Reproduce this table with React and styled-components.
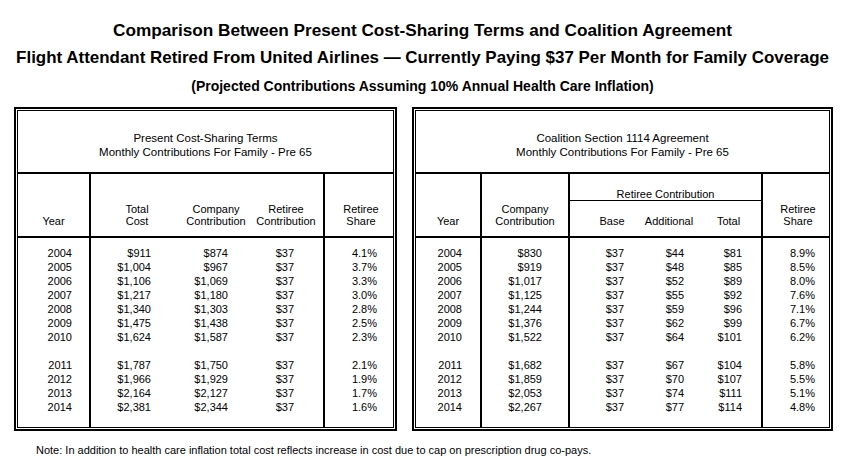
import styled, { createGlobalStyle } from 'styled-components'

const GlobalStyle = createGlobalStyle`
	body {
		margin: 0;
		background: #fff;
		color: #000;
		font-family: "Liberation Sans", Arial, sans-serif;
	}
`

// 연도별 데이터
const presentRows = [
	['2004', '$911', '$874', '$37', '4.1%'],
	['2005', '$1,004', '$967', '$37', '3.7%'],
	['2006', '$1,106', '$1,069', '$37', '3.3%'],
	['2007', '$1,217', '$1,180', '$37', '3.0%'],
	['2008', '$1,340', '$1,303', '$37', '2.8%'],
	['2009', '$1,475', '$1,438', '$37', '2.5%'],
	['2010', '$1,624', '$1,587', '$37', '2.3%'],
	['2011', '$1,787', '$1,750', '$37', '2.1%'],
	['2012', '$1,966', '$1,929', '$37', '1.9%'],
	['2013', '$2,164', '$2,127', '$37', '1.7%'],
	['2014', '$2,381', '$2,344', '$37', '1.6%'],
]

const coalitionRows = [
	['2004', '$830', '$37', '$44', '$81', '8.9%'],
	['2005', '$919', '$37', '$48', '$85', '8.5%'],
	['2006', '$1,017', '$37', '$52', '$89', '8.0%'],
	['2007', '$1,125', '$37', '$55', '$92', '7.6%'],
	['2008', '$1,244', '$37', '$59', '$96', '7.1%'],
	['2009', '$1,376', '$37', '$62', '$99', '6.7%'],
	['2010', '$1,522', '$37', '$64', '$101', '6.2%'],
	['2011', '$1,682', '$37', '$67', '$104', '5.8%'],
	['2012', '$1,859', '$37', '$70', '$107', '5.5%'],
	['2013', '$2,053', '$37', '$74', '$111', '5.1%'],
	['2014', '$2,267', '$37', '$77', '$114', '4.8%'],
]

/**
 * 컬럼 설정
 * head - 헤더 텍스트 줄, width - 폭, line - 오른쪽 세로선, pad - 값 오른쪽 여백, shift - 헤더 이동
 */
const presentCols = [
	{ head: ['Year'], width: 73, line: true, pad: 17, shift: 0 },
	{ head: ['Total', 'Cost'], width: 92, pad: 32, shift: 0 },
	{ head: ['Company', 'Contribution'], width: 66, pad: 21, shift: 0 },
	{ head: ['Retiree', 'Contribution'], width: 76, line: true, pad: 29, shift: 0 },
	{ head: ['Retiree', 'Share'], width: 68, pad: 16, shift: 2 },
]

const coalitionCols = [
	{ head: ['Year'], width: 66, line: true, pad: 18, shift: 0, rows: '2 / 4' },
	{ head: ['Company', 'Contribution'], width: 88, line: true, pad: 26, shift: 0, rows: '2 / 4' },
	{ head: ['Base'], width: 80, pad: 26, shift: 2, rows: '3' },
	{ head: ['Additional'], width: 40, pad: 6, shift: -1, rows: '3' },
	{ head: ['Total'], width: 73, line: true, pad: 19, shift: 3, rows: '3' },
	{ head: ['Retiree', 'Share'], width: 66, pad: 14, shift: 2, rows: '2 / 4' },
]

const colTemplate = cols => cols.map(c => `${c.width}px`).join(' ')

function DataColumns({ cols, rows, dataRow }) {
	return cols.map((col, i) => (
		<DataCol key={i} $line={col.line} $pad={col.pad} $row={dataRow}>
			{rows.map((r, k) => (
				<Value key={k} $gap={r[0] === '2011'}>
					{r[i]}
				</Value>
			))}
		</DataCol>
	))
}

function HeadCells({ cols, defaultRow }) {
	return cols.map((col, i) => (
		<HeadCell key={i} $line={col.line} $shift={col.shift} $rows={col.rows || defaultRow}>
			{col.head.map(t => (
				<span key={t}>{t}</span>
			))}
		</HeadCell>
	))
}

function App() {
	return (
		<Page>
			<GlobalStyle />
			<Titles>
				<Title $size={17.2}>Comparison Between Present Cost-Sharing Terms and Coalition Agreement</Title>
				<Title $size={16.95}>
					Flight Attendant Retired From United Airlines — Currently Paying $37 Per Month for Family Coverage
				</Title>
				<SubTitle>(Projected Contributions Assuming 10% Annual Health Care Inflation)</SubTitle>
			</Titles>

			<Tables>
				<Frame $width={383}>
					<Grid $cols={colTemplate(presentCols)} $rows="63px 64px 189px">
						<TableTitle>
							<span>Present Cost-Sharing Terms</span>
							<span>Monthly Contributions For Family - Pre 65</span>
						</TableTitle>
						<HeadCells cols={presentCols} defaultRow="2" />
						<DataColumns cols={presentCols} rows={presentRows} dataRow="3" />
					</Grid>
				</Frame>

				<Frame $width={421}>
					<Grid $cols={colTemplate(coalitionCols)} $rows="63px 27px 37px 189px">
						<TableTitle>
							<span>Coalition Section 1114 Agreement</span>
							<span>Monthly Contributions For Family - Pre 65</span>
						</TableTitle>
						<HeadCells cols={coalitionCols} />
						<GroupHead>Retiree Contribution</GroupHead>
						<DataColumns cols={coalitionCols} rows={coalitionRows} dataRow="4" />
					</Grid>
				</Frame>
			</Tables>

			<Note>
				Note: In addition to health care inflation total cost reflects increase in cost due to cap on
				prescription drug co-pays.
			</Note>
		</Page>
	)
}
export default App

const Page = styled.div`
	width: 845px;
	height: 461px;
	overflow: hidden;
	background: #fff;
`

const Titles = styled.div`
	padding-top: 16px;
	text-align: center;
`

const Title = styled.div`
	font-size: ${p => p.$size}px;
	font-weight: bold;
	line-height: 28px;
	white-space: nowrap;
`

const SubTitle = styled.div`
	font-size: 14px;
	font-weight: bold;
	line-height: 29px;
`

const Tables = styled.div`
	display: flex;
	gap: 15px;
	padding-left: 14px;
	margin-top: 6px;
`

const Frame = styled.div`
	width: ${p => p.$width}px;
	border: 2px solid #000;
	padding: 1px;
	box-sizing: border-box;
`

const Grid = styled.div`
	display: grid;
	grid-template-columns: ${p => p.$cols};
	grid-template-rows: ${p => p.$rows};
	border: 1px solid #000;
	font-size: 11px;
`

const TableTitle = styled.div`
	grid-column: 1 / -1;
	grid-row: 1;
	display: flex;
	flex-direction: column;
	align-items: center;
	justify-content: center;
	padding-top: 6px;
	border-bottom: 2px solid #000;
	font-size: 11.5px;
	line-height: 14px;
	white-space: nowrap;
`

const HeadCell = styled.div`
	grid-row: ${p => p.$rows};
	display: flex;
	flex-direction: column;
	justify-content: flex-end;
	align-items: center;
	padding: 0 ${p => (p.$shift < 0 ? -p.$shift * 2 : 0)}px 9px
		${p => (p.$shift > 0 ? p.$shift * 2 : 0)}px;
	border-bottom: 2px solid #000;
	border-right: ${p => (p.$line ? '2px solid #000' : 'none')};
	line-height: 12px;
	text-align: center;
	white-space: nowrap;
`

const GroupHead = styled.div`
	grid-column: 3 / 6;
	grid-row: 2;
	display: flex;
	align-items: flex-end;
	justify-content: center;
	border-bottom: 1px solid #000;
	border-right: 2px solid #000;
	line-height: 12px;
	white-space: nowrap;
`

const DataCol = styled.div`
	grid-row: ${p => p.$row};
	padding: 8px ${p => p.$pad}px 0 0;
	border-right: ${p => (p.$line ? '2px solid #000' : 'none')};
	text-align: right;
	line-height: 14px;
	white-space: nowrap;
`

const Value = styled.div`
	margin-top: ${p => (p.$gap ? 14 : 0)}px;
`

const Note = styled.div`
	margin-top: 12px;
	padding-left: 36px;
	font-size: 11px;
	line-height: 14px;
`
